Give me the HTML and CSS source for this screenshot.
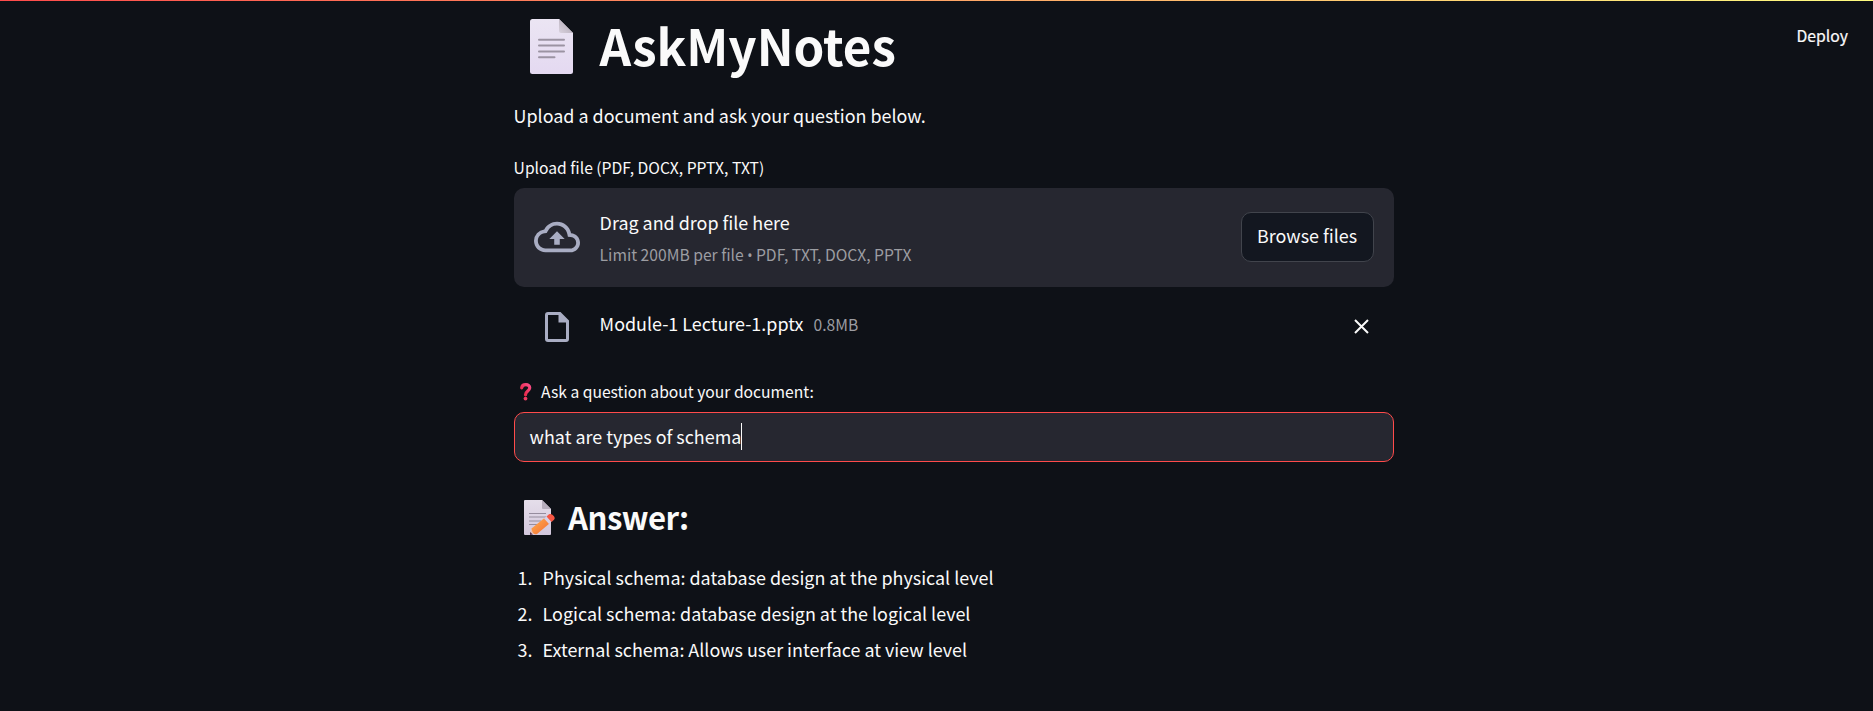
FILE: index.html
```html
<!DOCTYPE html>
<html lang="en">
<head>
<meta charset="utf-8">
<title>AskMyNotes</title>
<link rel="stylesheet" href="styles.css">
</head>
<body>
<div class="decoration"></div>
<header class="toolbar"><span class="deploy">Deploy</span></header>
<main class="column">
  <h1 class="title">
    <svg class="title-icon" width="43" height="55" viewBox="0 0 43 55">
      <defs>
        <linearGradient id="page" x1="0" y1="0" x2="0" y2="1"><stop offset="0" stop-color="#ebe5f3"/><stop offset="1" stop-color="#e4d9f1"/></linearGradient>
        <linearGradient id="fold" x1="1" y1="0" x2="0" y2="1"><stop offset="0.4" stop-color="#bdb5c1"/><stop offset="1" stop-color="#d9d2de"/></linearGradient>
      </defs>
      <path d="M2.500 0H29L43 14V52.500Q43 55 40.500 55H2.500Q0 55 0 52.500V2.500Q0 0 2.500 0Z" fill="url(#page)"/>
      <path d="M29 0L43 14H31Q29 14 29 12Z" fill="url(#fold)"/>
      <path d="M9 20.700H34M9 26.500H34M9 32.500H34M9 38.300H24.500" stroke="#9b93a2" stroke-width="2" stroke-linecap="round"/>
    </svg>
    <span>AskMyNotes</span>
  </h1>
  <p class="intro">Upload a document and ask your question below.</p>
  <div class="label upload-label">Upload file (PDF, DOCX, PPTX, TXT)</div>
  <section class="dropzone">
    <svg class="cloud" width="46" height="46" viewBox="0 0 24 24" fill="#a9adc3"><path d="M19.350 10.040A7.490 7.490 0 0 0 12 4C9.110 4 6.600 5.640 5.350 8.040A5.994 5.994 0 0 0 0 14c0 3.310 2.690 6 6 6h13c2.760 0 5-2.240 5-5 0-2.640-2.050-4.780-4.650-4.960zM19 18H6c-2.210 0-4-1.790-4-4 0-2.050 1.530-3.760 3.560-3.970l1.070-.110.500-.950A5.469 5.469 0 0 1 12 6c2.620 0 4.880 1.860 5.390 4.430l.300 1.500 1.530.110A2.980 2.980 0 0 1 22 15c0 1.650-1.350 3-3 3zM8 13h2.550v3h2.900v-3H16l-4-4z"/></svg>
    <div class="drop-text">
      <span class="drop-main">Drag and drop file here</span>
      <span class="drop-limit">Limit 200MB per file <span class="bullet">•</span> PDF, TXT, DOCX, PPTX</span>
    </div>
    <button class="browse">Browse files</button>
  </section>
  <div class="file-row">
    <svg class="file-icon" width="24" height="30" viewBox="0 0 24 30"><path d="M3 0H15.500L24 8.500V27Q24 30 21 30H3Q0 30 0 27V3Q0 0 3 0ZM3 3V27H21V10.500H13.500V3Z" fill="#a9adc3" fill-rule="evenodd"/></svg>
    <span class="file-name">Module-1 Lecture-1.pptx</span>
    <span class="file-size">0.8MB</span>
    <svg class="close" width="15" height="15" viewBox="0 0 15 15"><path d="M1 1L14 14M14 1L1 14" stroke="#fafafa" stroke-width="2"/></svg>
  </div>
  <div class="label question-label">
    <svg class="question-icon" width="12" height="18" viewBox="0 0 12 18">
      <defs><linearGradient id="mark" x1="1" y1="0" x2="0" y2="1"><stop offset="0" stop-color="#fa4d86"/><stop offset="1" stop-color="#e5203c"/></linearGradient></defs>
      <path d="M1.700 4.800C2.200 .700 9.900 .600 9.700 5C9.500 8 5.500 8 5.500 11.800" fill="none" stroke="url(#mark)" stroke-width="3.200" stroke-linecap="round"/>
      <circle cx="5.500" cy="15.600" r="1.900" fill="#f03b60"/>
    </svg>
    <span>Ask a question about your document:</span>
  </div>
  <div class="input"><span class="value">what are types of schema</span><span class="caret"></span></div>
  <h2 class="answer">
    <svg class="memo" width="31" height="35" viewBox="0 0 31 35">
      <defs>
        <linearGradient id="memo-page" x1="0" y1="0" x2="0" y2="1"><stop offset="0" stop-color="#e5deea"/><stop offset="1" stop-color="#d2c7dc"/></linearGradient>
        <linearGradient id="pencil" x1="0" y1="0" x2="1" y2="1"><stop offset="0" stop-color="#ffb04f"/><stop offset="1" stop-color="#f36b32"/></linearGradient>
      </defs>
      <path d="M1 0H18L27 9V34Q27 35 26 35H1Q0 35 0 34V1Q0 0 1 0Z" fill="url(#memo-page)"/>
      <path d="M18 0L27 9H19Q18 9 18 8Z" fill="#b7aebd"/>
      <path d="M5 13.500H22M5 17H22M5 21H17M5 24.500H13" stroke="#968d9e" stroke-width="1.200"/>
      <path d="M6 34.500L7.500 28L12 33.500Z" fill="#eac1b5"/>
      <path d="M6 35V32L9 34.500Z" fill="#563651"/>
      <path d="M7.500 28.500L20.500 18L25.500 23.500L13 34Q10 35 8.500 32Z" fill="url(#pencil)"/>
      <path d="M20 18.500L23 16L27.500 21.500L25 24Z" fill="#d9d0e5"/>
      <path d="M22.500 16.500L25 14.300C27.500 12.700 32.500 17.500 30 19.800L27.500 22Z" fill="#f65744"/>
    </svg>
    <span>Answer:</span>
  </h2>
  <ol class="answers">
    <li><span class="num">1.</span><span>Physical schema: database design at the physical level</span></li>
    <li><span class="num">2.</span><span>Logical schema: database design at the logical level</span></li>
    <li><span class="num">3.</span><span>External schema: Allows user interface at view level</span></li>
  </ol>
</main>
</body>
</html>
```
FILE: styles.css
```css
* { box-sizing: border-box; }
body {
  margin: 0;
  height: 711px;
  overflow: hidden;
  background: #0e1117;
  color: #fafafa;
  font-family: "Noto Sans CJK SC", "Noto Sans", sans-serif;
  font-size: 17.91px;
  line-height: 32px;
  white-space: nowrap;
}
.decoration { height: 1px; background: linear-gradient(90deg, #ff4b4b, #fffd80); }
.toolbar {
  position: absolute;
  top: 20px;
  right: 25px;
  font-size: 15.75px;
  -webkit-text-stroke: 0.2px #fafafa;
}
.column { width: 880px; margin-left: 513.6px; }
.title {
  display: flex;
  align-items: center;
  height: 66px;
  margin: 11px 0 0;
  padding-left: 16px;
  gap: 27px;
  font-size: 49.3px;
  font-weight: 700;
  line-height: 66px;
}
.title-icon { margin-top: 3px; }
.intro { margin: 21px 0 0; height: 32px; }
.label { font-size: 15.66px; height: 24px; line-height: 24px; }
.upload-label { margin-top: 25px; }
.dropzone {
  display: flex;
  align-items: center;
  height: 99px;
  margin-top: 8px;
  padding: 0 20px 2px;
  border-radius: 10px;
  background: #262730;
}
.cloud { margin-right: 20px; }
.drop-text { display: flex; flex-direction: column; flex: 1; padding-top: 4px; }
.drop-limit { font-size: 15.66px; color: #9c9da2; line-height: 30px; padding-top: 2px; }
.bullet { font-family: "Noto Sans", sans-serif; font-size: 14px; }
.browse {
  width: 133px;
  height: 50px;
  padding: 0 0 3px;
  border: 1px solid #41444c;
  border-radius: 10px;
  background: #131720;
  color: inherit;
  font: inherit;
}
.file-row { display: flex; align-items: center; height: 32px; margin-top: 20px; padding: 0 25px 0 31px; }
.file-icon { margin: 8px 31px 0 0; }
.file-name { margin: -1px 10px 0 0; }
.file-size { flex: 1; font-size: 15.66px; color: #9c9da2; margin-top: 3px; }
.close { margin-top: 6px; }
.question-label { display: flex; align-items: center; margin-top: 41px; padding-left: 6px; gap: 9.4px; }
.question-icon { margin-top: -1px; }
.input {
  display: flex;
  align-items: center;
  height: 50px;
  margin-top: 8px;
  padding: 0 0 2px 15px;
  border: 1px solid #ff4b4b;
  border-radius: 10px;
  background: #262730;
}
.value { margin-top: -1px; }
.caret { width: 1px; height: 27px; background: #fafafa; }
.answer {
  display: flex;
  align-items: center;
  height: 42px;
  margin: 34px 0 0;
  padding-left: 10px;
  gap: 13.5px;
  font-size: 31.1px;
  font-weight: 700;
  letter-spacing: -0.5px;
  line-height: 42px;
}
.answers { list-style: none; margin: 21px 0 0; padding: 0; line-height: 36px; }
.answers li { display: flex; padding-left: 4px; }
.num { width: 25px; }
```
